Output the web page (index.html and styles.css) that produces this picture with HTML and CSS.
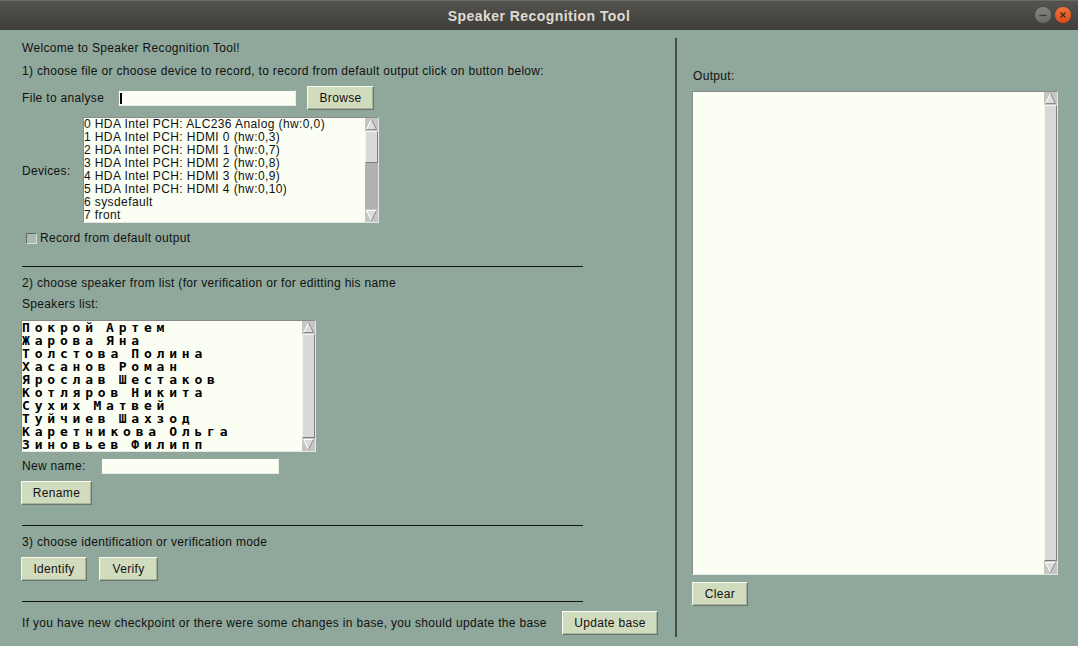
FILE: index.html
```html
<!DOCTYPE html>
<html>
<head>
<meta charset="utf-8">
<title>Speaker Recognition Tool</title>
<link rel="stylesheet" href="styles.css">
</head>
<body>
<div class="window">
  <div class="titlebar">
    <span class="title">Speaker Recognition Tool</span>
    <div class="wm">
      <span class="wm-btn wm-min"><svg width="16" height="16" viewBox="0 0 16 16"><line x1="4.5" y1="8.5" x2="11.5" y2="8.5" stroke="#3a3935" stroke-width="1.2"/></svg></span>
      <span class="wm-btn wm-close"><svg width="16" height="16" viewBox="0 0 16 16"><path d="M5.5 5.5 L10.5 10.5 M10.5 5.5 L5.5 10.5" stroke="#3a2a22" stroke-width="1.2"/></svg></span>
    </div>
  </div>
  <div class="main">
    <div class="left">
      <div class="line welcome">Welcome to Speaker Recognition Tool!</div>
      <div class="line step1">1) choose file or choose device to record, to record from default output click on button below:</div>
      <div class="file-row">
        <span class="label file-label">File to analyse</span>
        <span class="entry file-entry"><span class="cursor"></span></span>
        <span class="btn browse">Browse</span>
      </div>
      <div class="devices-row">
        <span class="label dev-label">Devices:</span>
        <div class="listbox dev-list">
          <div class="items">
            <div class="item">0 HDA Intel PCH: ALC236 Analog (hw:0,0)</div>
            <div class="item">1 HDA Intel PCH: HDMI 0 (hw:0,3)</div>
            <div class="item">2 HDA Intel PCH: HDMI 1 (hw:0,7)</div>
            <div class="item">3 HDA Intel PCH: HDMI 2 (hw:0,8)</div>
            <div class="item">4 HDA Intel PCH: HDMI 3 (hw:0,9)</div>
            <div class="item">5 HDA Intel PCH: HDMI 4 (hw:0,10)</div>
            <div class="item">6 sysdefault</div>
            <div class="item">7 front</div>
          </div>
          <div class="scrollbar">
            <svg class="arrow" width="13" height="13" viewBox="0 0 13 13"><polygon points="6.5,1.5 11.5,11.5 1.5,11.5" fill="#dcdcdc"/><path d="M1.5 11.5 L6.5 1.5" stroke="#ffffff" stroke-width="1"/><path d="M6.5 1.5 L11.5 11.5 L1.5 11.5" fill="none" stroke="#8c8c8c" stroke-width="1"/></svg>
            <div class="track">
              <div class="slider dev-slider"></div>
            </div>
            <svg class="arrow" width="13" height="13" viewBox="0 0 13 13"><polygon points="1.5,1.5 11.5,1.5 6.5,11.5" fill="#dcdcdc"/><path d="M1.5 1.5 L11.5 1.5 M1.5 1.5 L6.5 11.5" stroke="#ffffff" stroke-width="1" fill="none"/><path d="M11.5 1.5 L6.5 11.5" stroke="#8c8c8c" stroke-width="1"/></svg>
          </div>
        </div>
      </div>
      <div class="check-row">
        <span class="checkbox"></span>
        <span class="label">Record from default output</span>
      </div>
      <div class="sep sep1"></div>
      <div class="line step2">2) choose speaker from list (for verification or for editting his name</div>
      <div class="line spk-label">Speakers list:</div>
      <div class="listbox spk-list">
        <div class="items spk-items">
          <div class="item">Покрой Артем</div>
          <div class="item">Жарова Яна</div>
          <div class="item">Толстова Полина</div>
          <div class="item">Хасанов Роман</div>
          <div class="item">Ярослав Шестаков</div>
          <div class="item">Котляров Никита</div>
          <div class="item">Сухих Матвей</div>
          <div class="item">Туйчиев Шахзод</div>
          <div class="item">Каретникова Ольга</div>
          <div class="item">Зиновьев Филипп</div>
        </div>
        <div class="scrollbar">
          <svg class="arrow" width="13" height="13" viewBox="0 0 13 13"><polygon points="6.5,1.5 11.5,11.5 1.5,11.5" fill="#dcdcdc"/><path d="M1.5 11.5 L6.5 1.5" stroke="#ffffff" stroke-width="1"/><path d="M6.5 1.5 L11.5 11.5 L1.5 11.5" fill="none" stroke="#8c8c8c" stroke-width="1"/></svg>
          <div class="track">
            <div class="slider full-slider"></div>
          </div>
          <svg class="arrow" width="13" height="13" viewBox="0 0 13 13"><polygon points="1.5,1.5 11.5,1.5 6.5,11.5" fill="#dcdcdc"/><path d="M1.5 1.5 L11.5 1.5 M1.5 1.5 L6.5 11.5" stroke="#ffffff" stroke-width="1" fill="none"/><path d="M11.5 1.5 L6.5 11.5" stroke="#8c8c8c" stroke-width="1"/></svg>
        </div>
      </div>
      <div class="newname-row">
        <span class="label nn-label">New name:</span>
        <span class="entry nn-entry"></span>
      </div>
      <span class="btn rename">Rename</span>
      <div class="sep sep2"></div>
      <div class="line step3">3) choose identification or verification mode</div>
      <div class="mode-row">
        <span class="btn identify">Identify</span>
        <span class="btn verify">Verify</span>
      </div>
      <div class="sep sep3"></div>
      <div class="update-row">
        <span class="label">If you have new checkpoint or there were some changes in base, you should update the base</span>
        <span class="btn update">Update base</span>
      </div>
    </div>
    <div class="vsep"></div>
    <div class="right">
      <div class="line out-label">Output:</div>
      <div class="listbox output">
        <div class="items"></div>
        <div class="scrollbar">
          <svg class="arrow" width="13" height="13" viewBox="0 0 13 13"><polygon points="6.5,1.5 11.5,11.5 1.5,11.5" fill="#dcdcdc"/><path d="M1.5 11.5 L6.5 1.5" stroke="#ffffff" stroke-width="1"/><path d="M6.5 1.5 L11.5 11.5 L1.5 11.5" fill="none" stroke="#8c8c8c" stroke-width="1"/></svg>
          <div class="track">
            <div class="slider full-slider"></div>
          </div>
          <svg class="arrow" width="13" height="13" viewBox="0 0 13 13"><polygon points="1.5,1.5 11.5,1.5 6.5,11.5" fill="#dcdcdc"/><path d="M1.5 1.5 L11.5 1.5 M1.5 1.5 L6.5 11.5" stroke="#ffffff" stroke-width="1" fill="none"/><path d="M11.5 1.5 L6.5 11.5" stroke="#8c8c8c" stroke-width="1"/></svg>
        </div>
      </div>
      <span class="btn clear">Clear</span>
    </div>
  </div>
</div>
</body>
</html>
```

FILE: styles.css
```css
* { box-sizing: border-box; }
html, body { margin: 0; padding: 0; }
body {
  width: 1078px;
  height: 646px;
  overflow: hidden;
  background: #8fa89b;
  font-family: "Liberation Sans", Arial, sans-serif;
  font-size: 12px;
  color: #111;
  letter-spacing: 0.32px;
}
.window { width: 1078px; height: 646px; display: flex; flex-direction: column; }

.titlebar {
  height: 30px;
  flex: none;
  position: relative;
  background: linear-gradient(#55534e, #3e3d39);
  border-top: 1px solid #6a6863;
  display: flex;
  align-items: center;
  justify-content: center;
}
.title {
  font-family: "Liberation Sans", Arial, sans-serif;
  font-weight: bold;
  font-size: 14px;
  letter-spacing: 0.45px;
  color: #dfdbd2;
}
.wm {
  position: absolute;
  right: 7px;
  top: 6px;
  display: flex;
  gap: 4px;
}
.wm-btn {
  width: 16px;
  height: 16px;
  border-radius: 50%;
  display: block;
}
.wm-btn svg { display: block; }
.wm-min { background: linear-gradient(#85837e, #6d6b66); }
.wm-close { background: linear-gradient(#f2713d, #de4c14); }

.main { flex: 1; display: flex; }

.left {
  width: 675px;
  flex: none;
  padding-left: 21px;
  display: flex;
  flex-direction: column;
  align-items: flex-start;
}
.line { height: 16px; line-height: 16px; padding-left: 1px; white-space: nowrap; }
.label { white-space: nowrap; padding-left: 1px; }
.welcome { margin-top: 10px; }
.step1 { margin-top: 7px; }

.file-row { margin-top: 7px; height: 24px; display: flex; align-items: center; }
.file-label { width: 97px; }
.entry {
  display: block;
  background: #fbfff3;
  border-top: 1px solid #9aa69c;
  border-left: 1px solid #9aa69c;
  border-bottom: 1px solid #e9eee2;
  border-right: 1px solid #e9eee2;
}
.file-entry { width: 178px; height: 16px; position: relative; }
.cursor { position: absolute; left: 1px; top: 2px; width: 2px; height: 11px; background: #000; }

.btn {
  display: flex;
  align-items: center;
  justify-content: center;
  height: 24px;
  background: #d1dbbe;
  border-top: 1px solid #f7f9f2;
  border-left: 1px solid #f7f9f2;
  border-right: 1px solid #6b7668;
  border-bottom: 1px solid #6b7668;
  box-shadow: inset -1px -1px 0 #a8b39c;
  white-space: nowrap;
  flex: none;
}
.browse { margin-left: 11px; width: 67px; }

.devices-row { margin-top: 7px; height: 106px; display: flex; align-items: center; }
.dev-label { width: 62px; padding-top: 1px; }

.listbox {
  display: flex;
  background: #fbfff3;
  border-top: 1px solid #8a8a8a;
  border-left: 1px solid #8a8a8a;
  border-right: 1px solid #e6e6e6;
  border-bottom: 1px solid #e6e6e6;
}
.items { flex: 1; overflow: hidden; }
.item { height: 13px; line-height: 13px; white-space: nowrap; }
.dev-list { width: 296px; height: 106px; }
.dev-list .item { letter-spacing: 0.4px; }

.scrollbar {
  width: 13px;
  flex: none;
  display: flex;
  flex-direction: column;
  background: #c6c6c6;
}
.arrow { display: block; flex: none; }
.track { flex: 1; display: flex; flex-direction: column; background: #b1b1b1; }
.slider {
  background: #d9d9d9;
  border-top: 1px solid #f5f5f5;
  border-left: 1px solid #f5f5f5;
  border-right: 1px solid #7e7e7e;
  border-bottom: 1px solid #7e7e7e;
}
.dev-slider { height: 32px; }
.full-slider { flex: 1; }

.check-row { margin-top: 8px; height: 14px; display: flex; align-items: center; padding-left: 5px; }
.checkbox {
  display: block;
  width: 11px;
  height: 11px;
  margin-right: 2px;
  background: #a9bcaf;
  border-top: 1px solid #5f6b62;
  border-left: 1px solid #5f6b62;
  border-right: 1px solid #d5ddd5;
  border-bottom: 1px solid #d5ddd5;
}

.sep { width: 561px; height: 1px; background: #141414; margin-left: 1px; flex: none; }
.sep1 { margin-top: 21px; }
.step2 { margin-top: 8px; }
.spk-label { margin-top: 5px; }
.spk-list { margin-top: 8px; width: 295px; height: 132px; }
.spk-items .item {
  font-family: "DejaVu Sans Mono", monospace;
  font-weight: bold;
  font-size: 13px;
  letter-spacing: 4.8px;
  word-spacing: -4.3px;
  color: #000;
  line-height: 13px;
}

.newname-row { margin-top: 5px; height: 18px; display: flex; align-items: center; }
.nn-label { width: 80px; }
.nn-entry { width: 178px; height: 16px; }
.rename { margin-top: 6px; width: 71px; }

.sep2 { margin-top: 20px; }
.step3 { margin-top: 8px; }
.mode-row { margin-top: 7px; display: flex; gap: 12px; }
.identify { width: 66px; }
.verify { width: 59px; }
.sep3 { margin-top: 20px; }
.update-row { margin-top: 9px; height: 24px; display: flex; align-items: center; }
.update-row .label { width: 541px; }
.update { width: 96px; }

.vsep { width: 2px; flex: none; margin-top: 8px; height: 599px; background: #4a4a4a; }

.right {
  flex: 1;
  padding-left: 15px;
  display: flex;
  flex-direction: column;
  align-items: flex-start;
}
.out-label { margin-top: 38px; }
.output { margin-top: 7px; width: 366px; height: 484px; }
.clear { margin-top: 7px; width: 56px; }
```
